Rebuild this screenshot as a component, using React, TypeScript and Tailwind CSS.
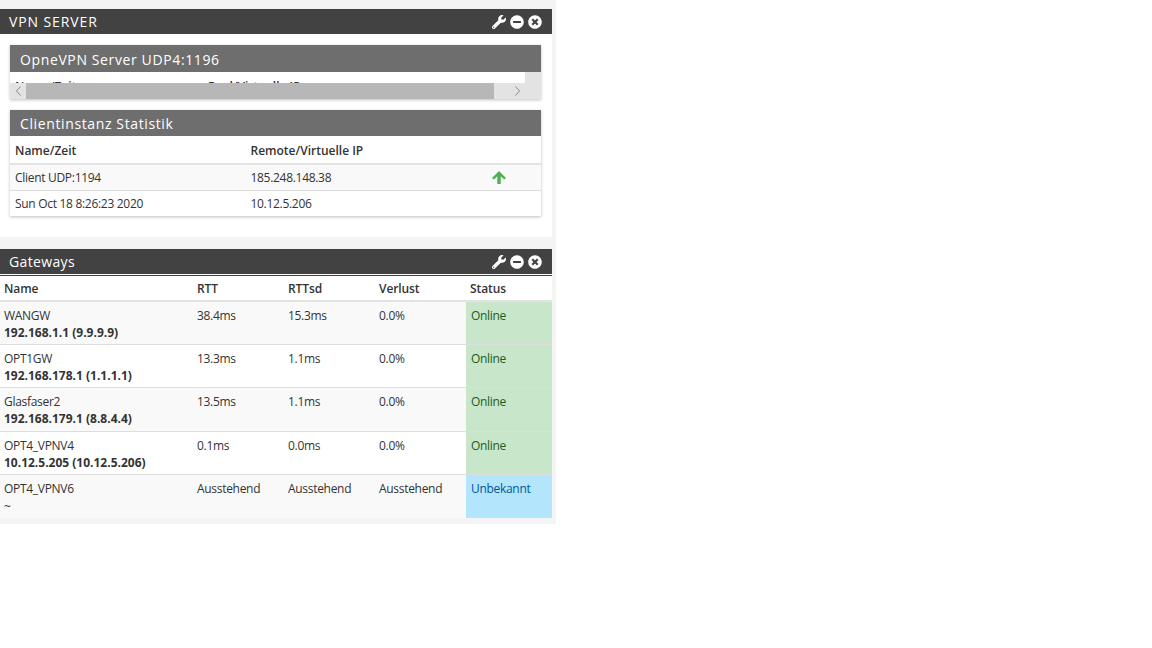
import React from 'react';
import { FaWrench, FaMinusCircle, FaTimesCircle } from 'react-icons/fa';

const PanelHeader: React.FC<{ title: string; spacing: string }> = ({ title, spacing }) => (
  <div className="flex h-[25px] items-center justify-between bg-[#424242] pl-[9px] pr-[10px] text-white">
    <span className={`text-[14px] ${spacing}`}>{title}</span>
    <div className="flex items-center gap-[4px]">
      <FaWrench className="h-[14px] w-[14px]" />
      <FaMinusCircle className="h-[14px] w-[14px]" />
      <FaTimesCircle className="h-[14px] w-[14px]" />
    </div>
  </div>
);

const CardTitle: React.FC<{ title: string; h: string }> = ({ title, h }) => (
  <div className={`flex items-center bg-[#6e6e6e] pl-[10px] pt-[1px] text-[14px] tracking-[0.62px] text-white ${h}`}>{title}</div>
);

const Chevron: React.FC<{ d: string }> = ({ d }) => (
  <svg width="7" height="10" viewBox="0 0 7 10" fill="none" stroke="#8a8a8a" strokeWidth="1">
    <path d={d} />
  </svg>
);

const gateways = [
  { name: 'WANGW', ip: '192.168.1.1 (9.9.9.9)', rtt: '38.4ms', sd: '15.3ms', loss: '0.0%', status: 'Online', h: 'h-[43px]', bg: 'bg-[#f9f9f9]' },
  { name: 'OPT1GW', ip: '192.168.178.1 (1.1.1.1)', rtt: '13.3ms', sd: '1.1ms', loss: '0.0%', status: 'Online', h: 'h-[43px]', bg: 'bg-white' },
  { name: 'Glasfaser2', ip: '192.168.179.1 (8.8.4.4)', rtt: '13.5ms', sd: '1.1ms', loss: '0.0%', status: 'Online', h: 'h-[44px]', bg: 'bg-[#f9f9f9]' },
  { name: 'OPT4_VPNV4', ip: '10.12.5.205 (10.12.5.206)', rtt: '0.1ms', sd: '0.0ms', loss: '0.0%', status: 'Online', h: 'h-[43px]', bg: 'bg-white' },
  { name: 'OPT4_VPNV6', ip: '~', rtt: 'Ausstehend', sd: 'Ausstehend', loss: 'Ausstehend', status: 'Unbekannt', h: 'h-[43px]', bg: 'bg-[#f9f9f9]' },
];

export default function App() {
  return (
    <div className="min-h-[648px] bg-white font-['Open_Sans',sans-serif] text-[12px] text-[#333]">
      <div className="w-[556px] bg-[#f4f4f4] pb-[6px] pt-[9px]">
        {/* VPN server */}
        <div className="w-[552px] bg-white">
          <PanelHeader title="VPN SERVER" spacing="tracking-[0.9px]" />
          <div className="flex h-[203px] flex-col gap-[11px] px-[10px] pt-[11px] tracking-[-0.3px]">
            <div className="w-[531px] shadow-[0_1px_3px_rgba(0,0,0,0.25)]">
              <CardTitle title="OpneVPN Server UDP4:1196" h="h-[27px]" />
              <div className="flex h-[11px] overflow-hidden bg-[#e3e3e3]">
                <div className="flex w-[515px] bg-white pl-[5px] pt-[6px] font-semibold tracking-normal">
                  <span className="w-[193px]">Name/Zeit</span>
                  <span>Real/Virtuelle IP</span>
                </div>
              </div>
              <div className="flex h-[16px] items-center bg-[#e3e3e3]">
                <div className="flex w-[16px] justify-center">
                  <Chevron d="M5.5 0.5 L1.5 5 L5.5 9.5" />
                </div>
                <div className="h-full w-[468px] bg-[#b7b7b7]" />
                <div className="flex flex-1 justify-center">
                  <Chevron d="M1.5 0.5 L5.5 5 L1.5 9.5" />
                </div>
              </div>
            </div>

            <div className="w-[531px] shadow-[0_1px_3px_rgba(0,0,0,0.25)]">
              <CardTitle title="Clientinstanz Statistik" h="h-[26px]" />
              <div className="flex h-[29px] items-center border-b-2 border-[#e3e3e3] bg-white pl-[5px] pt-[2px] font-semibold tracking-normal">
                <span className="w-[235.5px]">Name/Zeit</span>
                <span>Remote/Virtuelle IP</span>
              </div>
              <div className="flex h-[26px] items-center border-b border-[#ddd] bg-[#f9f9f9] pl-[5px]">
                <span className="w-[235.5px]">Client UDP:1194</span>
                <span className="w-[241.5px]">185.248.148.38</span>
                <svg width="14" height="13" viewBox="0 0 14 13" fill="#4caf50">
                  <path d="M7 0 L14 7 L12.2 8.6 L8.7 5.2 L8.7 13 L5.3 13 L5.3 5.2 L1.8 8.6 L0 7 Z" />
                </svg>
              </div>
              <div className="flex h-[25px] items-center bg-white pl-[5px]">
                <span className="w-[235.5px]">Sun Oct 18 8:26:23 2020</span>
                <span>10.12.5.206</span>
              </div>
            </div>
          </div>
        </div>

        {/* Gateways */}
        <div className="mt-[12px] w-[552px] bg-white">
          <PanelHeader title="Gateways" spacing="tracking-[0.35px]" />
          <div className="h-[2px] border-b border-[#424242]" />
          <div className="flex h-[26px] items-center border-b-2 border-[#e3e3e3] pl-[4px] pt-[1px] font-semibold tracking-[-0.1px]">
            <span className="w-[193px]">Name</span>
            <span className="w-[91px]">RTT</span>
            <span className="w-[91px]">RTTsd</span>
            <span className="w-[91px]">Verlust</span>
            <span>Status</span>
          </div>
          {gateways.map((g, i) => (
            <div key={g.name} className={`flex ${g.h} ${g.bg} ${i < 4 ? 'border-b border-[#ddd]' : ''} tracking-[-0.3px]`}>
              <div className="w-[197px] pl-[4px] pt-[5px] leading-[17px]">
                <div>{g.name}</div>
                <div className={g.ip === '~' ? 'pt-[1px]' : 'font-bold tracking-normal'}>{g.ip}</div>
              </div>
              <div className="w-[91px] pt-[5px] leading-[17px]">{g.rtt}</div>
              <div className="w-[91px] pt-[5px] leading-[17px]">{g.sd}</div>
              <div className="w-[87px] pt-[5px] leading-[17px]">{g.loss}</div>
              <div className={`flex-1 pl-[5px] pt-[5px] leading-[17px] ${g.status === 'Online' ? 'bg-[#c8e6c9] text-[#1b5e20]' : 'bg-[#b3e5fc] text-[#01579b]'}`}>{g.status}</div>
            </div>
          ))}
        </div>
      </div>
    </div>
  );
}
